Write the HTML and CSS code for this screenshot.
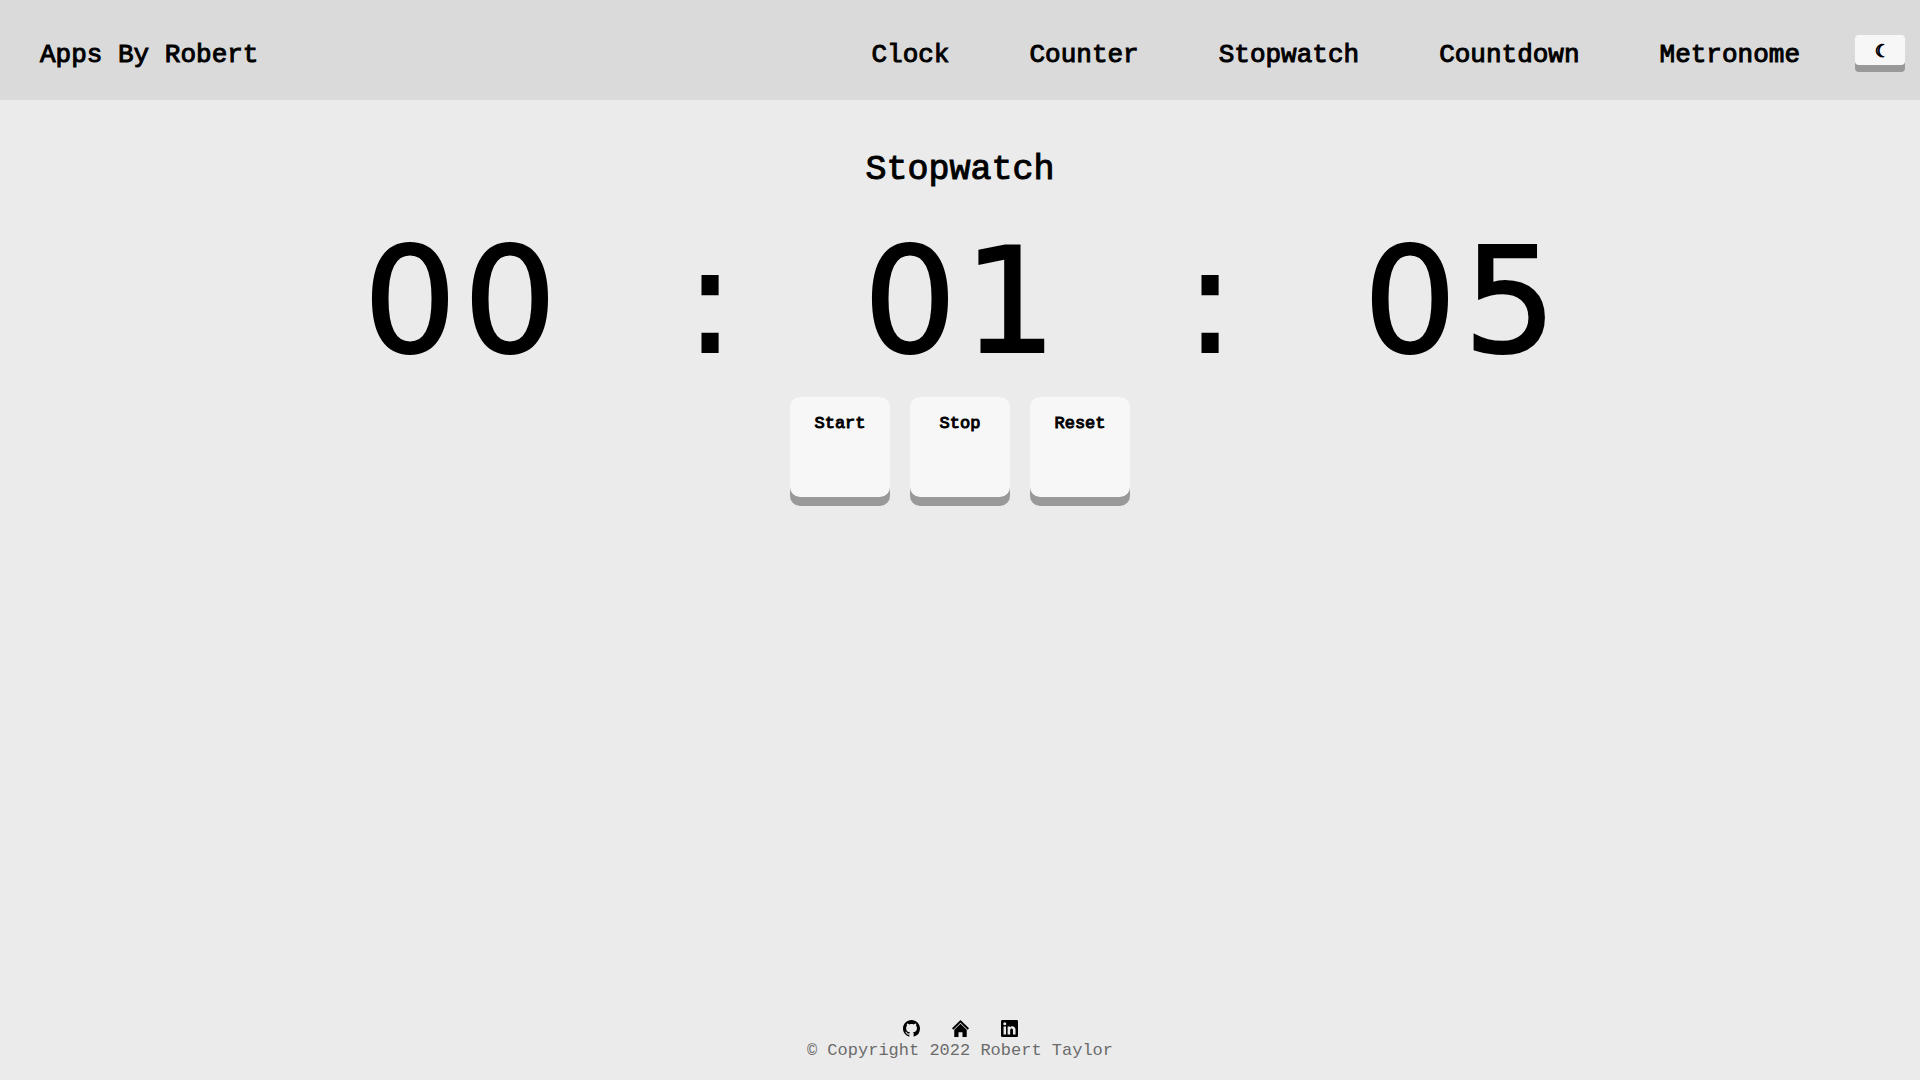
FILE: index.html
```html
<!DOCTYPE html>
<html lang="en">
<head>
  <meta charset="utf-8">
  <meta name="viewport" content="width=device-width, initial-scale=1">
  <title>Stopwatch - Apps By Robert</title>
  <link rel="stylesheet" href="styles.css">
</head>
<body>
  <header class="site-header">
    <a class="brand" href="#">Apps By Robert</a>
    <nav class="nav" aria-label="Apps">
      <a class="nav-link" href="#clock">Clock</a>
      <a class="nav-link" href="#counter">Counter</a>
      <a class="nav-link" href="#stopwatch">Stopwatch</a>
      <a class="nav-link" href="#countdown">Countdown</a>
      <a class="nav-link" href="#metronome">Metronome</a>
    </nav>
    <button class="key key-small" type="button" aria-label="Toggle dark mode">☾</button>
  </header>

  <main class="stopwatch">
    <h1 class="title">Stopwatch</h1>
    <div class="time" role="timer">
      <span class="pair"><span class="digit">0</span><span class="digit">0</span></span>
      <span class="digit">:</span>
      <span class="pair"><span class="digit">0</span><span class="digit">1</span></span>
      <span class="digit">:</span>
      <span class="pair"><span class="digit">0</span><span class="digit">5</span></span>
    </div>
    <div class="controls">
      <button class="key" type="button">Start</button>
      <button class="key" type="button">Stop</button>
      <button class="key" type="button">Reset</button>
    </div>
  </main>

  <footer class="site-footer">
    <div class="social">
      <a class="social-link" href="#github" aria-label="GitHub">
        <svg class="icon" viewBox="0 0 16 16"><path d="M8 0C3.58 0 0 3.58 0 8c0 3.54 2.29 6.53 5.47 7.59.4.07.55-.17.55-.38 0-.19-.01-.82-.01-1.49-2.01.37-2.53-.49-2.69-.94-.09-.23-.48-.94-.82-1.13-.28-.15-.68-.52-.01-.53.63-.01 1.08.58 1.23.82.72 1.21 1.87.87 2.33.66.07-.52.28-.87.51-1.07-1.78-.2-3.64-.89-3.64-3.95 0-.87.31-1.59.82-2.15-.08-.2-.36-1.02.08-2.12 0 0 .67-.21 2.2.82.64-.18 1.32-.27 2-.27s1.36.09 2 .27c1.53-1.04 2.2-.82 2.2-.82.44 1.1.16 1.92.08 2.12.51.56.82 1.27.82 2.15 0 3.07-1.87 3.75-3.65 3.95.29.25.54.73.54 1.48 0 1.07-.01 1.93-.01 2.2 0 .21.15.46.55.38A8.01 8.01 0 0 0 16 8c0-4.42-3.58-8-8-8z"/></svg>
      </a>
      <a class="social-link" href="#home" aria-label="Home">
        <svg class="icon" viewBox="0 0 18 18"><path d="M9 0 0 8.8l1.4 1.4L9 2.9l7.6 7.3L18 8.8z"/><path d="M9 4 2.4 10.4V18h4.5v-5h4.2v5h4.5v-7.6z"/></svg>
      </a>
      <a class="social-link" href="#linkedin" aria-label="LinkedIn">
        <svg class="icon" viewBox="0 0 18 18"><path fill-rule="evenodd" d="M1.3 0h15.4Q18 0 18 1.3v15.4q0 1.3-1.3 1.3H1.3Q0 18 0 16.7V1.3Q0 0 1.3 0zM2.7 6.8v8.5h2.6V6.8zM4 2.4a1.6 1.6 0 1 0 0 3.2 1.6 1.6 0 0 0 0-3.2zM7 6.8v8.5h2.7v-4.2c0-2.7 3-2.7 3 0v4.2h2.7v-4.8c0-4.3-4.6-4.8-5.8-2.5V6.8z"/></svg>
      </a>
    </div>
    <p class="copyright">© Copyright 2022 Robert Taylor</p>
  </footer>
</body>
</html>
```
FILE: styles.css
```css
* {
  box-sizing: border-box;
}

body {
  display: flex;
  flex-direction: column;
  min-height: 100vh;
  margin: 0;
  background: #ebebeb;
  color: #000;
  font-family: "Liberation Mono", monospace;
}

.site-header {
  display: flex;
  align-items: center;
  padding: 0 15px 0 40px;
  background: #dadada;
  font-size: 26px;
  line-height: 90px;
}

.brand,
.nav-link {
  padding-top: 10px;
  color: inherit;
  text-decoration: none;
  -webkit-text-stroke: 1px;
}

.nav {
  display: flex;
  gap: 80px;
  margin-left: auto;
  padding-right: 55px;
}

.key {
  display: flex;
  justify-content: center;
  width: 100px;
  height: 100px;
  padding: 17px 0;
  border: 0;
  border-radius: 10px;
  background: #f7f7f7;
  box-shadow: 0 9px 0 #999;
  color: #000;
  font: 17px/20px "Liberation Mono", monospace;
  -webkit-text-stroke: 1px;
  cursor: pointer;
}

.key-small {
  width: 50px;
  height: 30px;
  padding: 8px 0;
  border-radius: 4px;
  box-shadow: 0 7px 0 #999;
}

.stopwatch {
  display: flex;
  flex: 1;
  flex-direction: column;
  align-items: center;
  padding-top: 50px;
}

.title {
  margin: 0;
  font-size: 35px;
  font-weight: 400;
  line-height: 40px;
  -webkit-text-stroke: 1px;
}

.time {
  display: flex;
  gap: 100px;
  margin: 27px 0 11px;
  font-family: "DejaVu Sans", sans-serif;
  font-size: 147px;
  line-height: 169px;
  -webkit-text-stroke: 2px;
}

.pair {
  display: flex;
}

.digit {
  width: 100px;
  text-align: center;
}

.controls {
  display: flex;
  gap: 20px;
}

.site-footer {
  display: flex;
  flex-direction: column;
  align-items: center;
  padding-bottom: 19px;
}

.social {
  display: flex;
  gap: 32px;
}

.social-link {
  display: block;
  color: #000;
}

.icon {
  display: block;
  width: 17px;
  height: 17px;
  fill: currentColor;
}

.copyright {
  margin: 4px 0 0;
  color: #6b6b6b;
  font-size: 17px;
  line-height: 20px;
}
```
